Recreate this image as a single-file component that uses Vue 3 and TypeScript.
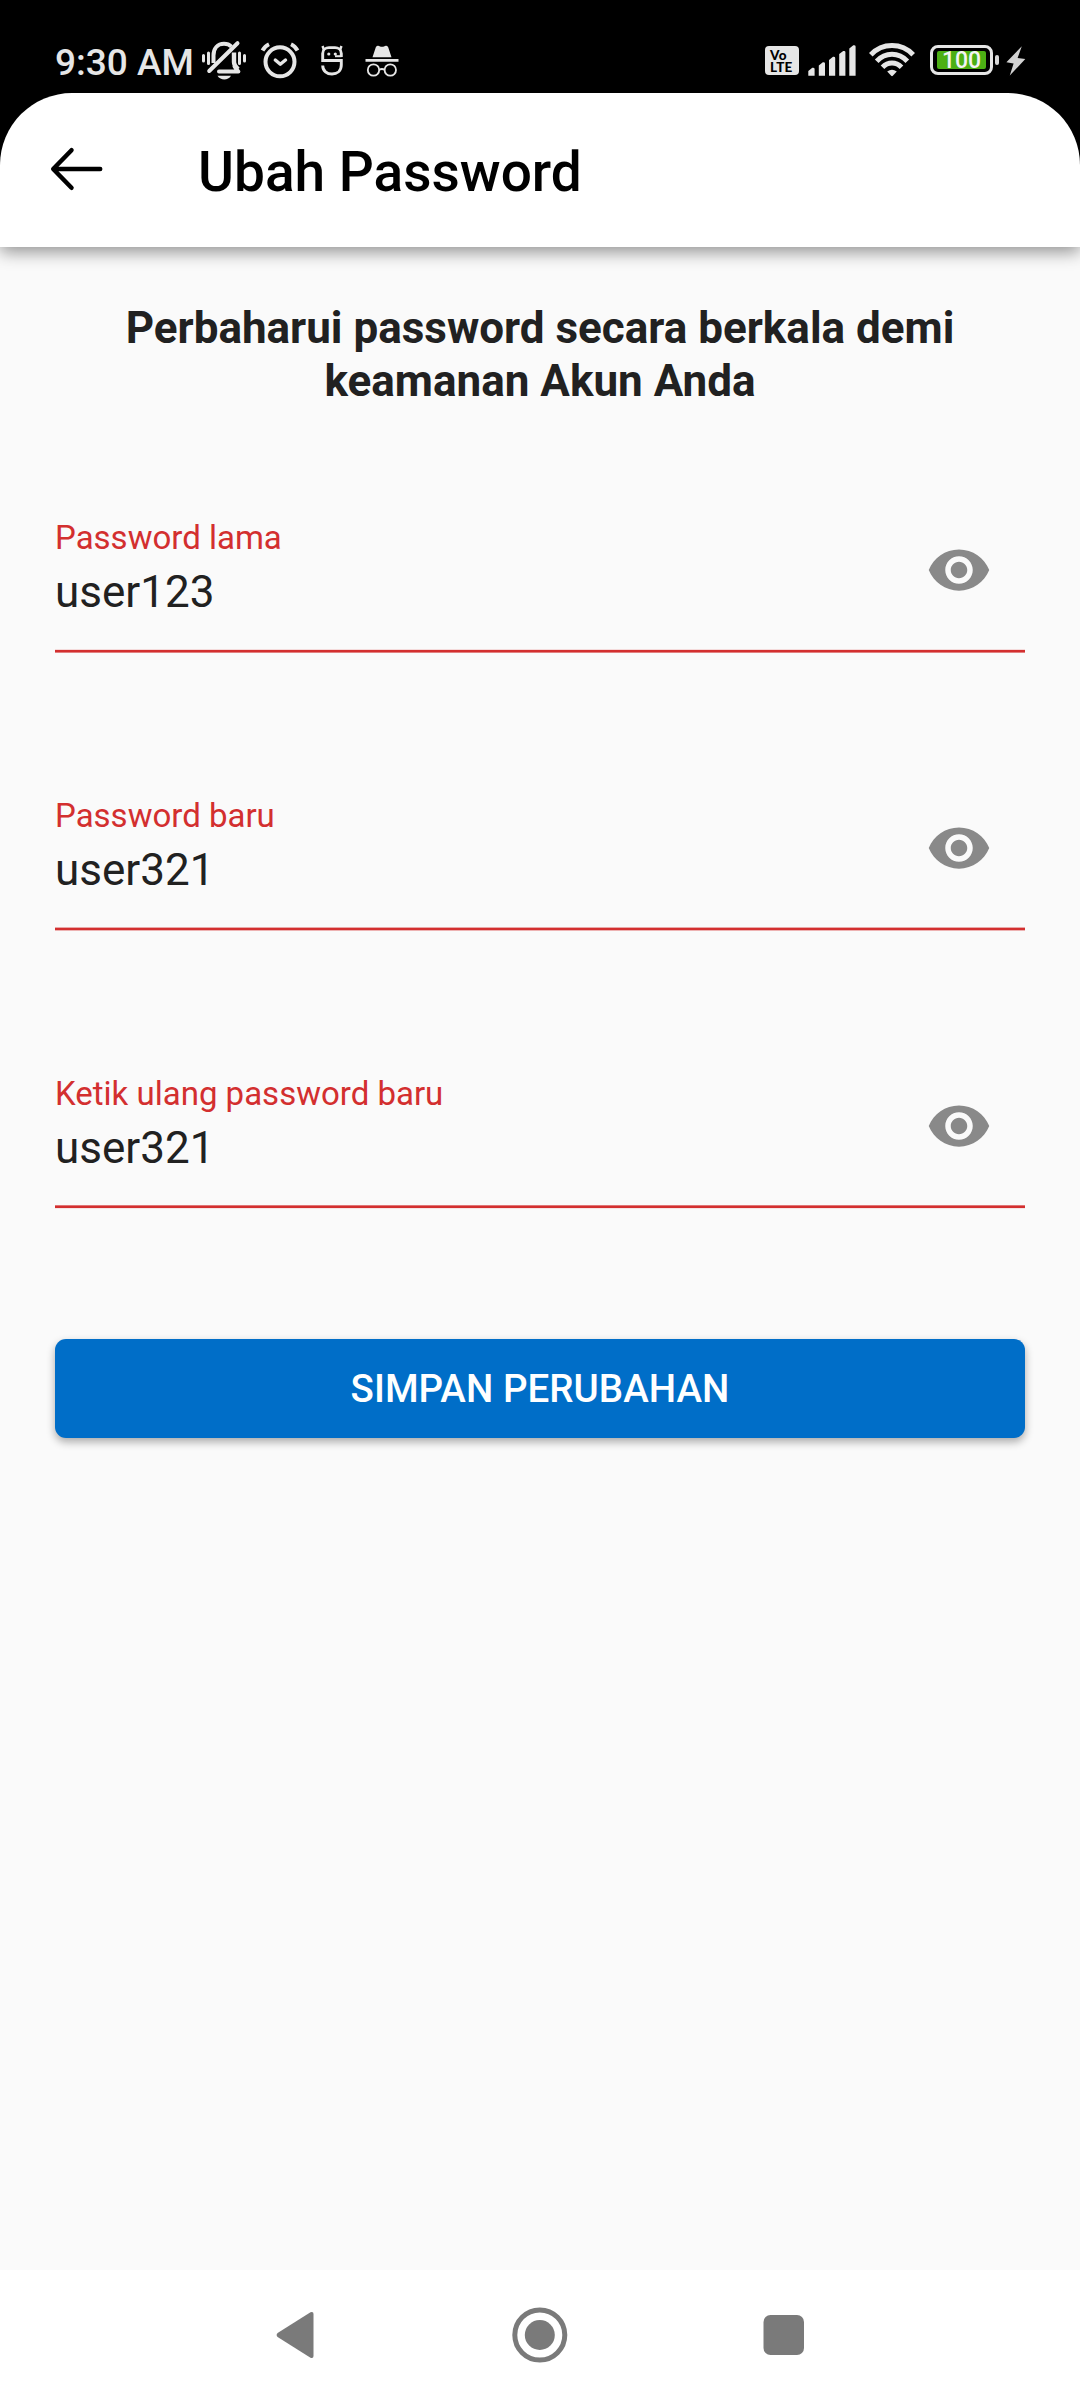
<script setup lang="ts">
interface Field {
  label: string
  value: string
  lineY: number
}

const fields: Field[] = [
  { label: 'Password lama', value: 'user123', lineY: 0.85 },
  { label: 'Password baru', value: 'user321', lineY: 0.6 },
  { label: 'Ketik ulang password baru', value: 'user321', lineY: 0.35 },
]
</script>

<template>
  <div class="screen">
    <div class="status">
      <span class="clock">9:30 AM</span>
      <svg class="bell" width="46" height="40" viewBox="0 0 46 40" fill="none" stroke="#e6e6e6" stroke-linecap="round">
        <path d="M12.5 23V15.5C12.5 8.5 16.5 3.8 23 3.8c3 0 5.600 1 7.400 2.800" stroke-width="4" stroke-linecap="butt" />
        <path d="M33 12.500V22c0 3 1 4 4 7.200" stroke-width="4.400" stroke-linecap="butt" />
        <path d="M18 31.600h19.400l-3.800-5" stroke-width="4" stroke-linejoin="round" />
        <path d="M8.200 31L36.500 3.200" stroke-width="4" />
        <path d="M16.500 35.800h13.500c-1.600 2.600-4 3.700-6.700 3.700s-5.200-1.100-6.800-3.700z" fill="#e6e6e6" stroke="none" />
        <path d="M2.500 15.500v5.500M43.500 15.500v5.500" stroke-width="3" />
        <path d="M7.500 13v10.500M38.500 13v10.500" stroke-width="3" />
      </svg>
      <svg class="alarm" width="40" height="38" viewBox="0 0 40 38" fill="none" stroke="#e6e6e6" stroke-linecap="round">
        <circle cx="20" cy="20.800" r="14.500" stroke-width="4" />
        <path d="M2.500 9.500Q5 5 9 3.200M37.500 9.500Q35 5 31 3.200" stroke-width="4" stroke-linecap="butt" />
        <path d="M15.300 19l5 4.300 5.200-4.300" stroke-width="3.400" stroke-linejoin="round" />
      </svg>
      <svg class="mascot" width="22" height="31" viewBox="0 0 22 31" fill="none" stroke="#e6e6e6" stroke-width="2.900">
        <path d="M20.300 12V8.500C20.300 4.500 17 2.600 14 2.600H8C5 2.600 1.700 4.500 1.700 8.500V15.500H20.300V20C20.300 26 16 29 11 29S1.700 26 1.700 20.500" />
        <path d="M20.500 11.200H14" stroke-width="2" />
        <path d="M2.800 4.500L1.500 1M19.200 4.500L20.500 1" stroke-width="2.400" />
        <circle cx="7.800" cy="9" r="1.600" fill="#e6e6e6" stroke="none" />
        <circle cx="14.300" cy="9" r="1.600" fill="#e6e6e6" stroke="none" />
      </svg>
      <svg class="incognito" width="34" height="32" viewBox="0 0 34 32" fill="none" stroke="#e6e6e6">
        <path d="M7.500 12.200L10.800 2.200Q11.500 .3 13.300.8L15.800 1.700Q17 2 18.200 1.700L20.700.8Q22.500.3 23.200 2.200L26.500 12.200z" fill="#e6e6e6" stroke="none" />
        <path d="M.5 15.400H33.500" stroke-width="2.600" />
        <circle cx="8.500" cy="25" r="5.700" stroke-width="1.800" />
        <circle cx="25.300" cy="25" r="5.700" stroke-width="1.800" />
        <path d="M14.200 24.800Q17 23.200 19.600 24.800" stroke-width="1.800" />
      </svg>

      <div class="right">
        <div class="volte"><span class="vo">Vo</span><span>LTE</span></div>
        <svg class="signal" width="48" height="31" viewBox="0 0 48 31" fill="#e6e6e6">
          <path d="M.3 30.700V26L4.300 22.800Q6.600 22.500 6.600 24V30.700zM10.800 30.700V20.500L14.800 17.200Q17 16.900 17 18.400V30.700zM21 30.700V15L25 11.800Q27.200 11.500 27.200 13V30.700zM31.200 30.700V9L35.200 6Q37.400 5.600 37.400 7V30.700zM41.300 30.700V3.500L45.300.3Q47.600 0 47.600 1.500V30.700z" />
        </svg>
        <svg class="wifi" width="46" height="34" viewBox="0 0 46 34" fill="none" stroke="#e6e6e6" stroke-width="5">
          <path d="M1.800 11.800C13.500-.5 32.500-.5 44.200 11.800" />
          <path d="M7.700 18.200C16.300 9 29.700 9 38.300 18.200" />
          <path d="M13.500 24.300C19 18.700 27 18.700 32.500 24.300" />
          <path d="M18.200 28.500Q23 25 27.800 28.500L23.800 32.800Q23 33.500 22.200 32.800z" fill="#e6e6e6" stroke="none" />
        </svg>
        <div class="battery"><div class="charge">100</div></div>
        <div class="nub"></div>
        <svg class="bolt" width="20" height="30" viewBox="0 0 20 30" fill="#d2d2d2">
          <path d="M15.800.3L.4 16.200 7.600 17.400 3.800 29.500 19.300 13.100 11.600 11.900z" />
        </svg>
      </div>
    </div>

    <header class="bar">
      <svg class="back" width="54" height="44" viewBox="0 0 54 44" fill="none" stroke="#000" stroke-width="4.500" stroke-linecap="round" stroke-linejoin="round">
        <path d="M50.200 22H4M21.500 3.200L3.200 22l18.300 18.800" />
      </svg>
      <h1>Ubah Password</h1>
    </header>

    <main>
      <h2>Perbaharui password secara berkala demi<br />keamanan Akun Anda</h2>
      <div class="form">
        <div v-for="f in fields" :key="f.label" class="field">
          <div class="row">
            <div class="texts">
              <label>{{ f.label }}</label>
              <div class="value">{{ f.value }}</div>
            </div>
            <svg class="eye" width="66" height="66" viewBox="0 0 24 24" fill="#898989">
              <path d="M12 4.500C7 4.500 2.730 7.610 1 12c1.730 4.390 6 7.500 11 7.500s9.270-3.110 11-7.500c-1.730-4.390-6-7.500-11-7.500zM12 17c-2.760 0-5-2.240-5-5s2.240-5 5-5 5 2.240 5 5-2.240 5-5 5zm0-8c-1.660 0-3 1.340-3 3s1.340 3 3 3 3-1.340 3-3-1.340-3-3-3z" />
            </svg>
          </div>
          <svg class="line" width="970" height="4" viewBox="0 0 970 4">
            <rect x="0" :y="f.lineY" width="970" height="2.750" fill="#d32f2f" />
          </svg>
        </div>
      </div>
      <button type="button">SIMPAN PERUBAHAN</button>
    </main>

    <nav>
      <svg width="530" height="60" viewBox="0 0 530 60" fill="#7a7a7a">
        <path d="M2.600 28L35.500 7.300Q38.500 6.300 38.500 9V51Q38.500 53.700 35.500 52.700L2.600 32Q.7 30 2.600 28z" />
        <circle cx="264.800" cy="30" r="25" fill="none" stroke="#7a7a7a" stroke-width="5" />
        <circle cx="264.800" cy="30" r="15" />
        <rect x="488.500" y="10" width="40.500" height="40" rx="7" />
      </svg>
    </nav>
  </div>
</template>

<style>
body {
  margin: 0;
  background: #fafafa;
}
</style>

<style scoped>
.screen {
  width: 1080px;
  height: 2400px;
  display: flex;
  flex-direction: column;
  overflow: hidden;
  background: #fafafa;
  color: #212121;
  font-family: Roboto, "Liberation Sans", sans-serif;
}
.status {
  height: 93px;
  flex: none;
  box-sizing: border-box;
  padding: 0 54px 0 55px;
  display: flex;
  align-items: flex-start;
  background: #000;
  color: #e6e6e6;
}
.status svg {
  flex: none;
}
.clock {
  width: 146px;
  margin-top: 41px;
  font-size: 37px;
  line-height: 44px;
  font-weight: 500;
  white-space: nowrap;
}
.bell { margin-top: 40px; }
.alarm { margin: 41px 0 0 13px; }
.mascot { margin: 45px 0 0 21px; }
.incognito { margin: 45px 0 0 22px; }
.right {
  margin-left: auto;
  display: flex;
  align-items: flex-start;
}
.volte {
  width: 34px;
  height: 29px;
  margin-top: 46px;
  box-sizing: border-box;
  padding: 3px 0 0 5px;
  border-radius: 4px;
  background: #e6e6e6;
  color: #000;
  display: flex;
  flex-direction: column;
  font-family: Lato, sans-serif;
  font-size: 13.5px;
  line-height: 12px;
  font-weight: 900;
  letter-spacing: 0.3px;
}
.signal { margin: 45px 0 0 9px; }
.wifi { margin: 43px 0 0 13px; }
.battery {
  width: 63px;
  height: 30px;
  margin: 45px 0 0 15px;
  box-sizing: border-box;
  border: 3px solid #e6e6e6;
  border-radius: 8px;
  padding: 3px 4px;
}
.charge {
  height: 18px;
  border-radius: 2px;
  background: #4caf14;
  color: #f4f4f4;
  font-size: 23px;
  line-height: 20px;
  font-weight: 500;
  text-align: center;
}
.nub {
  width: 4px;
  height: 10px;
  margin: 55px 0 0 2px;
  border-radius: 2px;
  background: #d8d8d8;
}
.bolt { margin: 46px 0 0 7px; }
.bar {
  position: relative;
  height: 154px;
  flex: none;
  box-sizing: border-box;
  padding-left: 50px;
  display: flex;
  align-items: center;
  background: #fff;
  box-shadow: 0 5px 16px rgba(0, 0, 0, 0.42);
}
.bar::before {
  content: "";
  position: absolute;
  inset: 0 0 auto;
  height: 80px;
  background: #000;
}
.bar::after {
  content: "";
  position: absolute;
  inset: 0;
  border-radius: 72px 72px 0 0;
  background: #fff;
}
.back,
h1 {
  position: relative;
  z-index: 1;
}
.back { margin-top: -2px; }
h1 {
  margin: 4px 0 0 94px;
  color: #000;
  font-size: 55px;
  line-height: 64px;
  font-weight: 500;
}
main {
  flex: 1;
  padding: 55px 55px 0;
}
h2 {
  margin: 0;
  font-size: 44px;
  line-height: 53px;
  font-weight: 700;
  text-align: center;
  white-space: nowrap;
}
.form {
  margin-top: 110px;
  display: flex;
  flex-direction: column;
  gap: 143px;
}
.field {
  height: 135px;
  display: flex;
  flex-direction: column;
  justify-content: space-between;
}
.row {
  display: flex;
  justify-content: space-between;
}
label {
  display: block;
  color: #d32f2f;
  font-size: 33px;
  line-height: 40px;
}
.value {
  margin-top: 8px;
  font-size: 44px;
  line-height: 52px;
}
.eye { margin: 19px 33px 0 0; }
.line { display: block; }
button {
  display: block;
  width: 970px;
  height: 99px;
  margin: 130px 0 0;
  padding: 0;
  border: 0;
  border-radius: 11px;
  background: #006ec8;
  color: #fff;
  font: 500 38.5px/99px Roboto, "Liberation Sans", sans-serif;
  letter-spacing: 0.05px;
  box-shadow: 0 4px 8px rgba(0, 0, 0, 0.32);
}
nav {
  height: 130px;
  flex: none;
  display: flex;
  align-items: center;
  justify-content: center;
  background: #fff;
}
</style>
